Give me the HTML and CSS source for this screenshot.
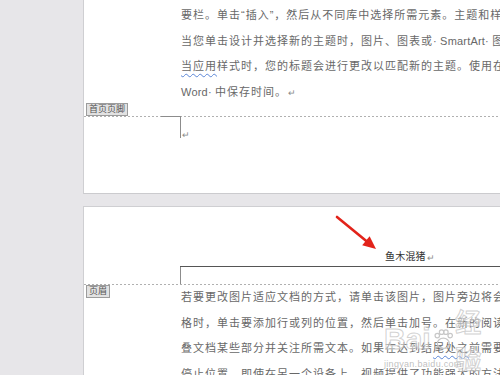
FILE: index.html
```html
<!DOCTYPE html>
<html lang="zh-CN">
<head>
<meta charset="utf-8">
<title>页眉页脚</title>
<link rel="stylesheet" href="styles.css">
</head>
<body>
<div class="canvas">
  <div class="page page1">
    <div class="text">
      <p class="line">要栏。单击“插入”，然后从不同库中选择所需元素。主题和样式也有助于文档保持协调。</p>
      <p class="line">当您单击设计并选择新的主题时，图片、图表或<span class="lat">· SmartArt· </span>图形将会更改以匹配新的主题。</p>
      <p class="line"><span class="spell">当应用</span>样式时，您的标题会进行更改以匹配新的主题。使用在需要位置出现的新按钮在</p>
      <p class="line"><span class="lat">Word· </span>中保存时间。<span class="ret">↵</span></p>
    </div>
    <div class="tabrow"><span class="tab">首页页脚</span></div>
    <div class="dash"></div>
    <div class="footer-body">
      <div class="corner1"></div>
      <span class="ret small">↵</span>
    </div>
  </div>

  <div class="page page2">
    <svg class="arrow" width="50" height="44" viewBox="0 0 50 44">
      <line x1="4" y1="4" x2="33" y2="27.7" stroke="#e2231a" stroke-width="2.6" stroke-linecap="round"/>
      <polygon points="43,36 29.2,32.2 36.6,23.2" fill="#e2231a"/>
    </svg>
    <div class="hdr"><span class="hdr-text">鱼木混猪</span><span class="ret small">↵</span></div>
    <div class="corner2"></div>
    <div class="dash"></div>
    <div class="body2">
      <div class="tabcol"><span class="tab">页眉</span></div>
      <div class="text">
        <p class="line">若要更改图片适应文档的方式，请单击该图片，图片旁边将会显示布局选项按钮。</p>
        <p class="line">格时，单击要添加行或列的位置，然后单击加号。在新的阅读视图中阅读更加容易。</p>
        <p class="line">叠文档某些部分并关注所需文本。如果在达到结<span class="spell">尾处之</span>前需要停止读取。</p>
        <p class="line">停止位置，即使在另一个设备上。视频提供了功能强大的方法帮助您证明您的观点。</p>
      </div>
    </div>
    <div class="wm">
      <div class="wm-top"><span class="wm-bai">Bai</span><svg class="wm-paw" width="24" height="26" viewBox="0 0 24 26"><ellipse cx="12" cy="18" rx="7" ry="6" fill="none" stroke="#c8c8c8" stroke-width="1.5"/><circle cx="5" cy="9" r="2.6" fill="none" stroke="#c8c8c8" stroke-width="1.4"/><circle cx="10" cy="5" r="2.6" fill="none" stroke="#c8c8c8" stroke-width="1.4"/><circle cx="15" cy="5" r="2.6" fill="none" stroke="#c8c8c8" stroke-width="1.4"/><circle cx="20" cy="9" r="2.6" fill="none" stroke="#c8c8c8" stroke-width="1.4"/></svg><span class="wm-jy">经验</span></div>
      <div class="wm-url">jingyan.baidu.com</div>
    </div>
  </div>
</div>
</body>
</html>
```

FILE: styles.css
```css
html, body {
  margin: 0;
  padding: 0;
}
body {
  width: 500px;
  height: 375px;
  overflow: hidden;
  background: #e7e6e9;
  font-family: "Liberation Sans", "Noto Sans CJK SC", sans-serif;
}
.canvas {
  padding-left: 83px;
}
.page {
  background: #ffffff;
  border-left: 1px solid #cfcfd2;
  overflow: hidden;
}
.page1 {
  height: 193px;
  border-bottom: 1px solid #cbcbce;
  margin-bottom: 12px;
}
.page2 {
  position: relative;
  border-top: 1px solid #cfcfd2;
  height: 200px;
}
.page1 .text {
  margin-left: 97px;
  padding-top: 3px;
}
.line {
  margin: 0;
  height: 25.5px;
  line-height: 25.5px;
  font-size: 11px;
  letter-spacing: 1px;
  color: #686868;
  white-space: nowrap;
}
.lat {
  letter-spacing: 0.2px;
}
.spell {
  text-decoration: underline wavy #5b86d6;
  text-decoration-thickness: 1px;
  text-underline-offset: 3px;
}
.ret {
  color: #8a8a8a;
  font-size: 9px;
  letter-spacing: 0;
  margin-left: 1px;
}
.tabrow {
  margin-top: -2px;
  height: 13px;
  padding-left: 2px;
}
.tab {
  display: inline-block;
  box-sizing: border-box;
  height: 13px;
  line-height: 11px;
  padding: 0 2px;
  font-size: 9px;
  color: #555555;
  background: #e2e2e2;
  border: 1px solid #9c9c9c;
  vertical-align: top;
}
.dash {
  height: 1px;
  background: repeating-linear-gradient(to right, #b0b0b0 0 2px, transparent 2px 4px);
}
.footer-body {
  display: flex;
  align-items: flex-end;
}
.corner1 {
  box-sizing: border-box;
  margin-left: 77px;
  margin-top: -1px;
  width: 20px;
  height: 22px;
  border-top: 1px solid #8c8c8c;
  border-right: 1px solid #8c8c8c;
}
.small {
  font-size: 9px;
  line-height: 9px;
  margin-left: 1px;
  margin-bottom: -2px;
}
.arrow {
  position: absolute;
  left: 249px;
  top: 6px;
}
.hdr {
  margin-top: 41px;
  margin-left: 96px;
  height: 18px;
  line-height: 18px;
  border-bottom: 1px solid #555555;
  padding-left: 205px;
  white-space: nowrap;
  display: flex;
  align-items: center;
}
.hdr-text {
  font-size: 10px;
  color: #333333;
  letter-spacing: 0.2px;
}
.hdr .small {
  margin-top: 3px;
  margin-bottom: 0;
}
.corner2 {
  margin-left: 96px;
  width: 0;
  height: 17px;
  border-left: 1px solid #8c8c8c;
}
.body2 {
  display: flex;
}
.tabcol {
  flex: none;
  width: 95px;
  padding-left: 2px;
}
.body2 .text {
  flex: 1;
  min-width: 0;
}
.wm {
  position: absolute;
  left: 300px;
  top: 114px;
  pointer-events: none;
}
.wm-top {
  display: flex;
  align-items: center;
  height: 36px;
}
.wm-bai {
  font-family: "Liberation Sans", sans-serif;
  font-size: 30px;
  font-weight: bold;
  color: rgba(255, 255, 255, 0.45);
  -webkit-text-stroke: 1px rgba(190, 190, 190, 0.7);
  letter-spacing: 0;
}
.wm-paw {
  margin: 0 2px;
}
.wm-jy {
  font-size: 26px;
  font-weight: bold;
  color: rgba(255, 255, 255, 0.45);
  -webkit-text-stroke: 1px rgba(190, 190, 190, 0.7);
}
.wm-url {
  margin-top: 2px;
  font-size: 9px;
  line-height: 10px;
  color: rgba(170, 170, 170, 0.75);
  letter-spacing: 0.3px;
}
```
